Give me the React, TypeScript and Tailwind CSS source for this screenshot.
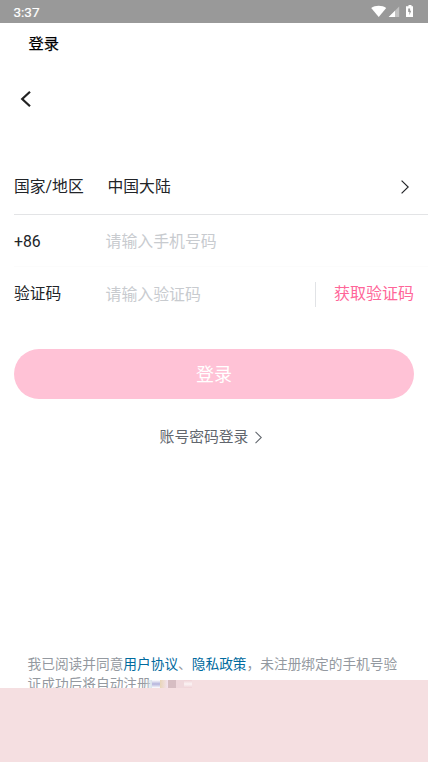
const mosaic = [
  'bg-[linear-gradient(90deg,transparent_0%,#d9e3ea80_60%,#d9e3ea_100%)]',
  'bg-[linear-gradient(180deg,#ffffff_0%,#b4b4dc_50%,#ffffff_100%)]',
  'bg-[linear-gradient(90deg,#e8d5b8,#f4e3f0)]',
  'bg-[#d6bdc2]',
  'bg-[#efd8dc]',
  'bg-[linear-gradient(180deg,#efd2d6_0%,#fbf3f4_50%,#efd2d6_100%)]',
];

function StatusBar() {
  return (
    <header className="flex h-[23px] shrink-0 items-center bg-[#999999] pl-[13.5px] pr-[14px] text-white">
      <span className="flex-1 pt-[2px] text-[13.5px] leading-none [-webkit-text-stroke:0.2px_white]">3:37</span>
      <svg className="h-[23px] w-[44px]" viewBox="0 0 44 23" fill="white">
        <path d="M1.200 8C5 4.900 12.400 4.900 16.200 8L8.700 17Z" />
        <path d="M29.200 6.500V17H18.700Z" opacity=".4" />
        <path d="M25 10.700V17H18.700Z" />
        <path
          fillRule="evenodd"
          d="M37 6.200h1.500V5h3v1.200H43V17h-7V6.200ZM38.200 8.500v3.500h1.200v3.200l1.800-4.400h-1.100V8.500Z"
        />
      </svg>
    </header>
  );
}

function Chevron({ className }: { className: string }) {
  return (
    <svg className={className} viewBox="0 0 8 14" fill="none" stroke="currentColor" strokeWidth="1.2">
      <path d="M.6.6 7.200 7 .6 13.400" />
    </svg>
  );
}

export default function App() {
  return (
    <main className="flex h-[762px] w-[428px] flex-col overflow-hidden bg-white font-[Roboto,'Noto_Sans_CJK_SC',sans-serif] text-[15.8px] text-[#222428]">
      <StatusBar />
      <h1 className="flex h-10 shrink-0 items-center pt-[2px] pl-[28.5px] text-[15.2px] text-black [-webkit-text-stroke:0.25px_black]">
        登录
      </h1>
      <button className="flex h-[72px] shrink-0 items-center pl-[20px] text-[#222222]" aria-label="返回">
        <svg className="h-[18px] w-3" viewBox="0 0 12 18" fill="none" stroke="currentColor" strokeWidth="2.200">
          <path d="M10 1.800 2.200 9 10 16.200" />
        </svg>
      </button>

      <section className="mt-[23px] flex shrink-0 flex-col">
        <div className="ml-[14px] flex h-[57px] items-center border-b border-[#e3e4e6] pt-px pr-[19px]">
          <span className="w-[93.5px] pt-px">国家/地区</span>
          <span className="flex-1 pt-px">中国大陆</span>
          <Chevron className="h-[14px] w-2" />
        </div>
        <div className="ml-[14px] flex h-[52px] items-center border-b border-[#fcfcfc]">
          <span className="w-[91.5px] pt-[2px]">+86</span>
          <span className="pt-[2px] text-[15.9px] text-[#c8cbcf]">请输入手机号码</span>
        </div>
        <div className="ml-[14px] flex h-[54px] items-center pr-[14px]">
          <span className="w-[91.5px]">验证码</span>
          <span className="flex-1 pt-px text-[15.9px] text-[#c8cbcf]">请输入验证码</span>
          <span className="h-[25px] border-l border-[#e1e3e6]" />
          <button className="pl-[18px] text-[16px] text-[#ff6699]">获取验证码</button>
        </div>
      </section>

      <button className="mx-[14px] mt-[28px] h-[50px] shrink-0 rounded-full bg-[#ffc2d6] text-[18px] text-white">
        登录
      </button>
      <button className="mt-[26px] flex h-6 shrink-0 items-center justify-center gap-[7px] pr-[6px] text-[14.8px] text-[#61666d]">
        账号密码登录
        <Chevron className="h-[13px] w-[7px]" />
      </button>

      <footer className="relative mt-auto h-[108px] shrink-0">
        <p className="pl-[27.5px] text-[13.700px] leading-[20px] whitespace-nowrap text-[#9499a0]">
          我已阅读并同意<a className="text-[#006a9e]">用户协议</a>、<a className="text-[#006a9e]">隐私政策</a>，未注册绑定的手机号验
          <br />
          证成功后将自动注册
        </p>
        <div className="absolute top-[26px] left-[144px] flex h-2 w-[48px]">
          {mosaic.map((tone) => (
            <i key={tone} className={`h-2 flex-1 ${tone}`} />
          ))}
        </div>
        <div className="absolute top-[26px] right-0 h-2 w-[236px] bg-[#f5dfe1]" />
        <div className="absolute inset-x-0 top-[34px] bottom-0 bg-[#f5dfe1]" />
      </footer>
    </main>
  );
}
